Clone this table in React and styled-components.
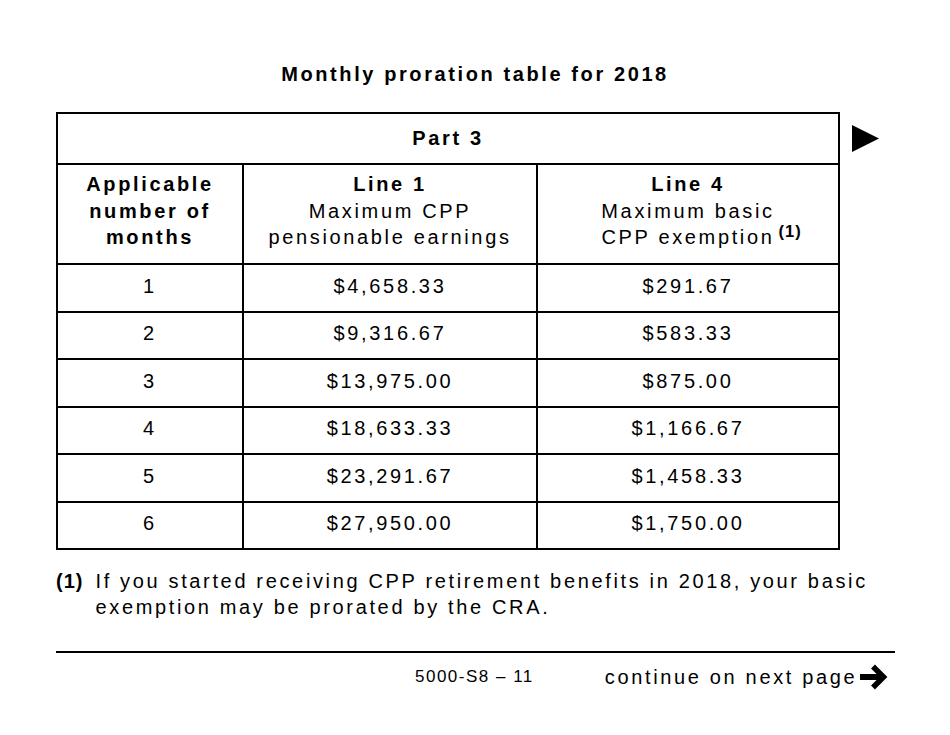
import React from 'react';
import styled, {createGlobalStyle} from 'styled-components';

const GlobalStyle = createGlobalStyle`
    body {
        margin: 0;
        background: #fff;
        color: #000;
        font-family: "Liberation Sans", Arial, sans-serif;
    }
`;

const rows = [
    ['1', '$4,658.33', '$291.67'],
    ['2', '$9,316.67', '$583.33'],
    ['3', '$13,975.00', '$875.00'],
    ['4', '$18,633.33', '$1,166.67'],
    ['5', '$23,291.67', '$1,458.33'],
    ['6', '$27,950.00', '$1,750.00'],
];

const App = () => (
    <Page>
        <GlobalStyle/>
        <Title>Monthly proration table for 2018</Title>

        <TableRow>
            <Table>
                <colgroup>
                    <col style={{width: 186}}/>
                    <col style={{width: 294}}/>
                    <col style={{width: 302}}/>
                </colgroup>
                <thead>
                    <tr>
                        <PartCell colSpan={3}>Part 3</PartCell>
                    </tr>
                    <tr>
                        <HeadCell>
                            <Bold>Applicable<br/>number of<br/>months</Bold>
                        </HeadCell>
                        <HeadCell>
                            <Bold>Line 1</Bold><br/>
                            Maximum CPP<br/>
                            pensionable earnings
                        </HeadCell>
                        <HeadCell>
                            <Bold>Line 4</Bold><br/>
                            Maximum basic<br/>
                            CPP exemption<Sup>(1)</Sup>
                        </HeadCell>
                    </tr>
                </thead>
                <tbody>
                    {rows.map(r => (
                        <tr key={r[0]}>
                            {r.map((v, i) => <Cell key={i}>{v}</Cell>)}
                        </tr>
                    ))}
                </tbody>
            </Table>
            <Marker viewBox="0 0 27 27" width="27" height="27">
                <polygon points="0,0 27,13.5 0,27" fill="#000"/>
            </Marker>
        </TableRow>

        <Note>
            <NoteTag>(1)</NoteTag>
            <NoteText>
                If you started receiving CPP retirement benefits in 2018, your basic
                exemption may be prorated by the CRA.
            </NoteText>
        </Note>

        <Rule/>

        <Footer>
            <PageNo>5000-S8 – 11</PageNo>
            <Continue>
                continue on next page
                <svg viewBox="0 0 28 26" width="28" height="26">
                    <rect x="0" y="10" width="20" height="6" fill="#000"/>
                    <path d="M13 2.5 L23.5 13 L13 23.5" fill="none" stroke="#000" strokeWidth="5.5"/>
                </svg>
            </Continue>
        </Footer>
    </Page>
);

export default App;

const Page = styled.div`
    width: 950px;
    height: 735px;
    box-sizing: border-box;
    padding: 62px 0 0 56px;
`;

const Title = styled.h1`
    margin: 0 0 0 -56px;
    font-size: 20px;
    font-weight: bold;
    letter-spacing: 2.6px;
    line-height: 24px;
    text-align: center;
`;

const TableRow = styled.div`
    display: flex;
    align-items: flex-start;
    gap: 12px;
    margin-top: 26px;
`;

const Table = styled.table`
    width: 783px;
    border-collapse: collapse;
    table-layout: fixed;
    font-size: 20px;
    letter-spacing: 2.65px;

    td, th {
        border: 2px solid #000;
        padding: 0;
        text-align: center;
    }
`;

const PartCell = styled.th`
    height: 49px;
    font-weight: bold;
`;

const HeadCell = styled.th`
    height: 92px;
    font-weight: normal;
    line-height: 26.5px;
    vertical-align: top;
    padding-top: 6px !important;
`;

const Bold = styled.span`
    font-weight: bold;
`;

const Sup = styled.span`
    display: inline-block;
    width: 0;
    white-space: nowrap;
    font-size: 16.5px;
    font-weight: bold;
    letter-spacing: 1px;
    position: relative;
    top: -7px;
    left: 4px;
`;

const Cell = styled.td`
    height: 42.5px;
    padding-bottom: 3px !important;
`;

const Marker = styled.svg`
    margin-top: 13px;
    flex: none;
`;

const Note = styled.div`
    display: flex;
    gap: 12px;
    margin-top: 18px;
    font-size: 20px;
    letter-spacing: 2.65px;
    line-height: 26px;
`;

const NoteTag = styled.span`
    font-weight: bold;
    letter-spacing: 1px;
`;

const NoteText = styled.p`
    margin: 0;
    width: 800px;
`;

const Rule = styled.div`
    width: 839px;
    height: 2px;
    background: #000;
    margin-top: 31px;
`;

const Footer = styled.div`
    display: flex;
    align-items: center;
    margin-top: 11px;
`;

const PageNo = styled.span`
    margin-left: 359px;
    font-size: 17px;
    letter-spacing: 1.5px;
`;

const Continue = styled.span`
    display: flex;
    align-items: center;
    gap: 3px;
    margin-left: 71px;
    font-size: 20px;
    letter-spacing: 2.65px;

    svg {
        flex: none;
    }
`;
